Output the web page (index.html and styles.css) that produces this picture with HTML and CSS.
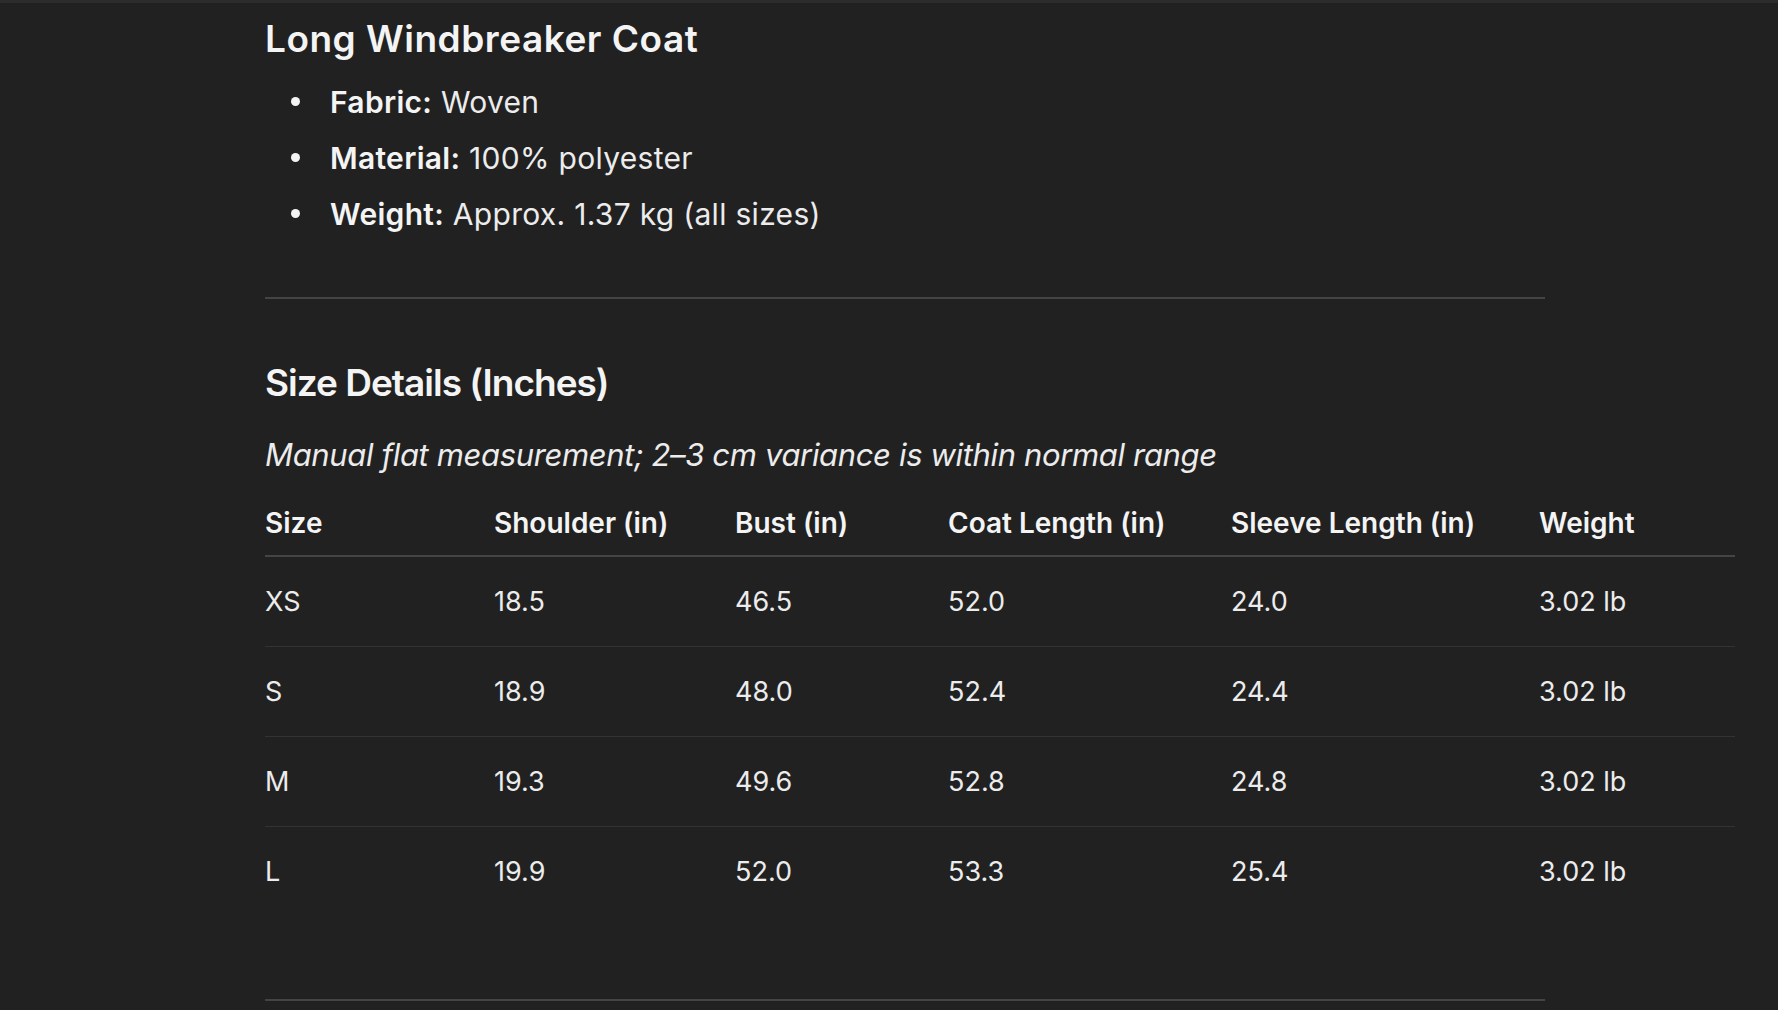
FILE: index.html
```html
<!DOCTYPE html>
<html lang="en">
<head>
<meta charset="utf-8">
<title>Long Windbreaker Coat</title>
<link rel="stylesheet" href="styles.css">
</head>
<body>
<div class="topline"></div>
<main class="content">
  <h3 class="heading first">Long Windbreaker Coat</h3>
  <ul class="specs">
    <li><strong>Fabric:</strong> Woven</li>
    <li><strong>Material:</strong> 100% polyester</li>
    <li><strong>Weight:</strong> Approx. 1.37 kg (all sizes)</li>
  </ul>
  <hr class="rule rule-top">
  <h3 class="heading second">Size Details (Inches)</h3>
  <p class="note"><em>Manual flat measurement; 2–3 cm variance is within normal range</em></p>
  <table class="sizes">
    <colgroup>
      <col class="c1"><col class="c2"><col class="c3"><col class="c4"><col class="c5"><col class="c6">
    </colgroup>
    <thead>
      <tr><th>Size</th><th>Shoulder (in)</th><th>Bust (in)</th><th>Coat Length (in)</th><th>Sleeve Length (in)</th><th>Weight</th></tr>
    </thead>
    <tbody>
      <tr><td>XS</td><td>18.5</td><td>46.5</td><td>52.0</td><td>24.0</td><td>3.02 lb</td></tr>
      <tr><td>S</td><td>18.9</td><td>48.0</td><td>52.4</td><td>24.4</td><td>3.02 lb</td></tr>
      <tr><td>M</td><td>19.3</td><td>49.6</td><td>52.8</td><td>24.8</td><td>3.02 lb</td></tr>
      <tr><td>L</td><td>19.9</td><td>52.0</td><td>53.3</td><td>25.4</td><td>3.02 lb</td></tr>
    </tbody>
  </table>
  <hr class="rule rule-bottom">
</main>
</body>
</html>
```

FILE: styles.css
```css
html, body {
  margin: 0;
  padding: 0;
  background: #212121;
}
body {
  color: #ececec;
  font-family: Inter, "Noto Sans", "Liberation Sans", sans-serif;
  overflow: hidden;
  height: 1010px;
}
.topline {
  height: 3px;
  background: #2c2c2c;
}
.content {
  margin-left: 265px;
  width: 1280px;
}
.heading {
  font-size: 37px;
  line-height: 46px;
  font-weight: 600;
  color: #f4f4f4;
  margin: 0;
  letter-spacing: 0.5px;
}
.heading.first {
  margin-top: 12.5px;
}
.heading.second {
  margin-top: 60.5px;
  letter-spacing: -1px;
}
.specs {
  list-style: none;
  margin: 12.5px 0 0 0;
  padding-left: 65px;
  font-size: 30px;
  line-height: 56px;
  letter-spacing: 0.3px;
}
.specs li::before {
  content: "";
  display: inline-block;
  width: 9px;
  height: 9px;
  border-radius: 50%;
  background: #f4f4f4;
  margin-left: -39px;
  margin-right: 30px;
  vertical-align: 7px;
}
.specs strong {
  font-weight: 600;
  color: #f4f4f4;
}
.rule {
  border: 0;
  height: 2px;
  background: #444444;
  margin: 0;
}
.rule-top {
  margin-top: 55px;
}
.rule-bottom {
  margin-top: 83px;
}
.note {
  margin: 29px 0 0 0;
  font-size: 31px;
  line-height: 40px;
  letter-spacing: -0.35px;
}
.sizes {
  margin-top: 33.5px;
  border-collapse: collapse;
  table-layout: fixed;
  width: 1470px;
  font-size: 27px;
  line-height: 30px;
}
.c1 { width: 229px; }
.c2 { width: 241px; }
.c3 { width: 213px; }
.c4 { width: 283px; }
.c5 { width: 308px; }
.c6 { width: 196px; }
.sizes th {
  text-align: left;
  font-size: 28px;
  font-weight: 600;
  letter-spacing: 0;
  color: #f4f4f4;
  padding: 0 0 17px 0;
  border-bottom: 2px solid #454545;
  white-space: nowrap;
}
.sizes td {
  padding: 30px 0 29px 0;
  border-bottom: 1px solid #333333;
  white-space: nowrap;
}
.sizes tbody tr:last-child td {
  border-bottom: 0;
}
```
